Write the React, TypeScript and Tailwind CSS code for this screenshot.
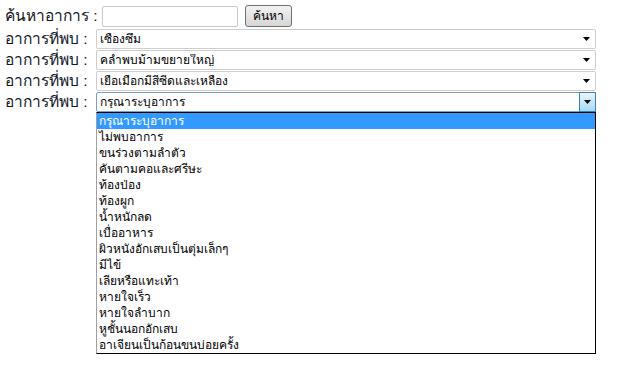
const options = [
  "กรุณาระบุอาการ",
  "ไม่พบอาการ",
  "ขนร่วงตามลำตัว",
  "คันตามคอและศรีษะ",
  "ท้องป่อง",
  "ท้องผูก",
  "น้ำหนักลด",
  "เบื่ออาหาร",
  "ผิวหนังอักเสบเป็นตุ่มเล็กๆ",
  "มีไข้",
  "เลียหรือแทะเท้า",
  "หายใจเร็ว",
  "หายใจลำบาก",
  "หูชั้นนอกอักเสบ",
  "อาเจียนเป็นก้อนขนบ่อยครั้ง",
];

const rows = [
  { value: "เซื่องซึม", focused: false },
  { value: "คล้ำพบม้ามขยายใหญ่", focused: false },
  { value: "เยื่อเมือกมีสีซีดและเหลือง", focused: false },
  { value: "กรุณาระบุอาการ", focused: true },
];

function Arrow() {
  return (
    <svg width="7" height="4" viewBox="0 0 7 4">
      <path d="M0 0h7L3.5 4z" fill="#000" />
    </svg>
  );
}

function FakeSelect({ value, focused }: { value: string; focused: boolean }) {
  return (
    <div
      className={`flex items-center w-[500px] h-[20px] bg-white rounded-[2px] border ${
        focused ? "border-[#7a9ec9]" : "border-[#cdcdcd]"
      }`}
    >
      <span className="flex-1 pl-[3px] text-[12px] leading-none text-black truncate">{value}</span>
      {focused ? (
        <span className="flex items-center justify-center w-[17px] h-[20px] -my-px -mr-px border border-[#3c7fb1] bg-gradient-to-b from-[#eaf6fd] to-[#a7d9f5]">
          <Arrow />
        </span>
      ) : (
        <span className="flex items-center justify-center w-[17px]">
          <Arrow />
        </span>
      )}
    </div>
  );
}

export default function App() {
  return (
    <div
      className="w-[617px] h-[365px] bg-white pl-[5px] pt-[4px] text-black"
      style={{ fontFamily: '"Liberation Sans", "Noto Sans", "DejaVu Sans", sans-serif' }}
    >
      <div className="flex items-center h-[24px]">
        <span className="shrink-0 whitespace-nowrap text-[15.5px] leading-none text-[#111827] w-[97px]">ค้นหาอาการ :</span>
        <input
          className="w-[136px] h-[21px] border border-[#c9c9c9] rounded-[2px] outline-none"
          defaultValue=""
        />
        <button className="ml-[7px] h-[22px] w-[47px] text-[12px] leading-none border border-[#707070] rounded-[3px] bg-gradient-to-b from-[#f2f2f2] to-[#d6d6d6]">
          ค้นหา
        </button>
      </div>
      <div className="flex flex-col gap-[1px] mt-[1px]">
        {rows.map((r, i) => (
          <div key={i} className="flex items-center h-[20px] relative">
            <span className="shrink-0 whitespace-nowrap text-[15.5px] leading-none text-[#111827] w-[91px]">อาการที่พบ :</span>
            <FakeSelect value={r.value} focused={r.focused} />
            {r.focused && (
              <ul className="absolute left-[91px] top-[20px] w-[500px] bg-white border border-black border-l-[#a0a0a0] z-10">
                {options.map((o, j) => (
                  <li
                    key={j}
                    className={`h-[16px] pl-[2px] text-[12px] leading-[16px] whitespace-nowrap ${
                      j === 0 ? "bg-[#3399ff] text-white" : "text-black"
                    }`}
                  >
                    {o}
                  </li>
                ))}
              </ul>
            )}
          </div>
        ))}
      </div>
    </div>
  );
}
